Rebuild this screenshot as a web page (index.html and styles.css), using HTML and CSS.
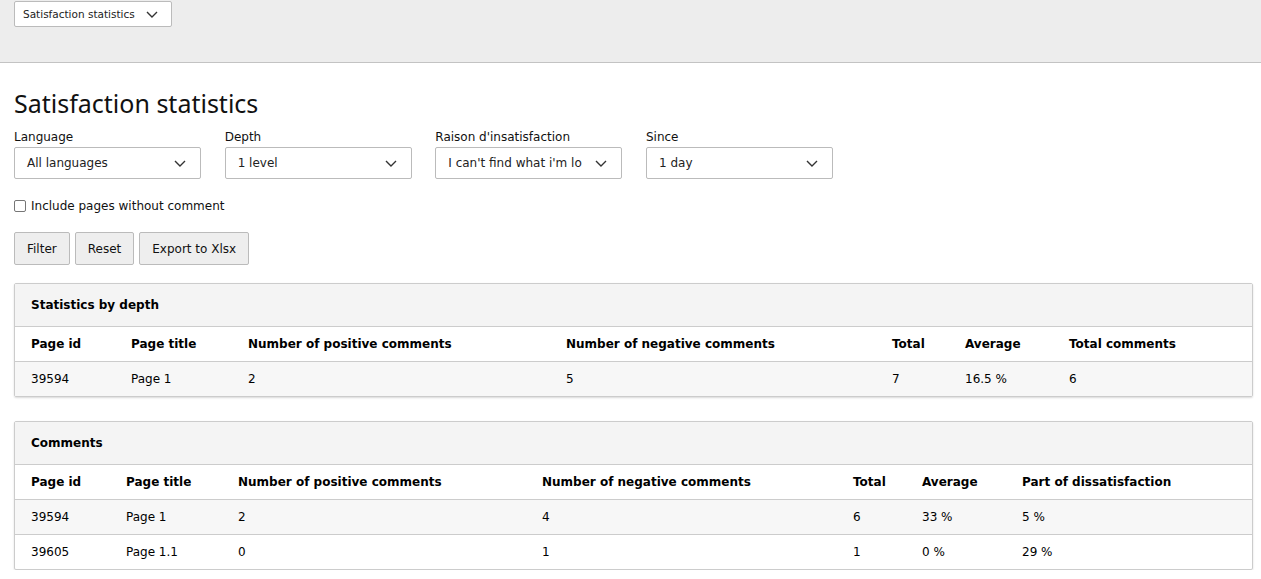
FILE: index.html
```html
<!DOCTYPE html>
<html>
<head>
<meta charset="utf-8">
<link rel="stylesheet" href="styles.css">
</head>
<body>
<div class="topbar">
  <div class="menu-select">
    <span>Satisfaction statistics</span>
    <svg class="chev" width="12" height="7" viewBox="0 0 12 7"><path d="M1 1l5 5 5-5" fill="none" stroke="#333" stroke-width="1.4"/></svg>
  </div>
</div>
<main class="content">
  <h1 class="title">Satisfaction statistics</h1>
  <div class="filters">
    <div class="field">
      <label class="label">Language</label>
      <div class="select"><span>All languages</span><svg class="chev" width="12" height="7" viewBox="0 0 12 7"><path d="M1 1l5 5 5-5" fill="none" stroke="#333" stroke-width="1.4"/></svg></div>
    </div>
    <div class="field">
      <label class="label">Depth</label>
      <div class="select"><span>1 level</span><svg class="chev" width="12" height="7" viewBox="0 0 12 7"><path d="M1 1l5 5 5-5" fill="none" stroke="#333" stroke-width="1.4"/></svg></div>
    </div>
    <div class="field">
      <label class="label">Raison d'insatisfaction</label>
      <div class="select"><span class="clip">I can't find what i'm lo</span><svg class="chev" width="12" height="7" viewBox="0 0 12 7"><path d="M1 1l5 5 5-5" fill="none" stroke="#333" stroke-width="1.4"/></svg></div>
    </div>
    <div class="field">
      <label class="label">Since</label>
      <div class="select"><span>1 day</span><svg class="chev" width="12" height="7" viewBox="0 0 12 7"><path d="M1 1l5 5 5-5" fill="none" stroke="#333" stroke-width="1.4"/></svg></div>
    </div>
  </div>
  <label class="check"><span class="box"></span>Include pages without comment</label>
  <div class="buttons">
    <button class="btn">Filter</button>
    <button class="btn">Reset</button>
    <button class="btn">Export to Xlsx</button>
  </div>

  <section class="panel">
    <div class="panel-head">Statistics by depth</div>
    <table class="table t1">
      <colgroup><col class="c1"><col class="c2"><col class="c3"><col class="c4"><col class="c5"><col class="c6"><col></colgroup>
      <thead><tr><th>Page id</th><th>Page title</th><th>Number of positive comments</th><th>Number of negative comments</th><th>Total</th><th>Average</th><th>Total comments</th></tr></thead>
      <tbody>
        <tr class="odd"><td>39594</td><td>Page 1</td><td>2</td><td>5</td><td>7</td><td>16.5 %</td><td>6</td></tr>
      </tbody>
    </table>
  </section>

  <section class="panel">
    <div class="panel-head">Comments</div>
    <table class="table t2">
      <colgroup><col class="c1"><col class="c2"><col class="c3"><col class="c4"><col class="c5"><col class="c6"><col></colgroup>
      <thead><tr><th>Page id</th><th>Page title</th><th>Number of positive comments</th><th>Number of negative comments</th><th>Total</th><th>Average</th><th>Part of dissatisfaction</th></tr></thead>
      <tbody>
        <tr class="odd"><td>39594</td><td>Page 1</td><td>2</td><td>4</td><td>6</td><td>33 %</td><td>5 %</td></tr>
        <tr><td>39605</td><td>Page 1.1</td><td>0</td><td>1</td><td>1</td><td>0 %</td><td>29 %</td></tr>
      </tbody>
    </table>
  </section>
</main>
</body>
</html>
```

FILE: styles.css
```css
* { box-sizing: border-box; }
html, body { margin: 0; padding: 0; background: #fff; }
body {
  font-family: "DejaVu Sans", Verdana, sans-serif;
  font-size: 12px;
  color: #000;
}
.topbar {
  height: 63px;
  background: #ededed;
  border-bottom: 1px solid #c3c3c3;
  padding: 1px 14px 0;
}
.menu-select {
  display: inline-flex;
  align-items: center;
  gap: 11px;
  height: 26px;
  width: 158px;
  padding: 0 0 0 8px;
  background: #fff;
  border: 1px solid #bbb;
  border-radius: 2px;
  color: #222;
  font-size: 10.5px;
}
.chev { display: block; flex: none; }
.content { padding: 0 8px 0 14px; }
.title {
  font-family: "Noto Sans", sans-serif;
  font-weight: 400;
  font-size: 25px;
  line-height: 32px;
  margin: 24px 0 11px;
  color: #111;
}
.filters { display: flex; gap: 23.67px; }
.field { display: flex; flex-direction: column; width: 187px; }
.label { line-height: 14px; margin-bottom: 3px; color: #111; }
.select {
  height: 32px;
  border: 1px solid #bbb;
  border-radius: 2px;
  display: flex;
  align-items: center;
  justify-content: space-between;
  padding: 0 14px 0 12px;
  color: #222;
  background: #fff;
}
.select .clip { white-space: nowrap; overflow: hidden; }
.check {
  display: flex;
  align-items: center;
  gap: 5px;
  margin-top: 20px;
  height: 14px;
  color: #111;
}
.box {
  width: 12px; height: 12px;
  border: 1px solid #767676;
  border-radius: 2px;
  background: #fff;
}
.buttons { display: flex; gap: 5px; margin-top: 19px; }
.btn {
  font: inherit;
  color: #111;
  height: 33px;
  padding: 0 12px;
  background: #eee;
  border: 1px solid #bbb;
  border-radius: 2px;
}
.panel {
  margin-top: 18px;
  border: 1px solid #ccc;
  border-radius: 2px;
  box-shadow: 0 1px 2px rgba(0,0,0,0.15);
  overflow: hidden;
}
.panel + .panel { margin-top: 24px; }
.panel-head {
  background: #f4f4f4;
  height: 43px;
  line-height: 42px;
  padding: 0 16px;
  font-weight: bold;
  border-bottom: 1px solid #ccc;
}
.table { width: 100%; border-collapse: collapse; table-layout: fixed; }
.table th, .table td {
  text-align: left;
  padding: 0 0 0 16px;
  height: 35px;
  white-space: nowrap;
}
.table th { font-weight: bold; background: #fff; height: 34px; }
.table tbody tr { border-top: 1px solid #ccc; }
.table tr.odd td { background: #f7f7f7; }
.t1 .c1 { width: 100px; }
.t1 .c2 { width: 117px; }
.t1 .c3 { width: 318px; }
.t1 .c4 { width: 326px; }
.t1 .c5 { width: 73px; }
.t1 .c6 { width: 104px; }
.t2 .c1 { width: 95px; }
.t2 .c2 { width: 112px; }
.t2 .c3 { width: 304px; }
.t2 .c4 { width: 311px; }
.t2 .c5 { width: 69px; }
.t2 .c6 { width: 100px; }
```
